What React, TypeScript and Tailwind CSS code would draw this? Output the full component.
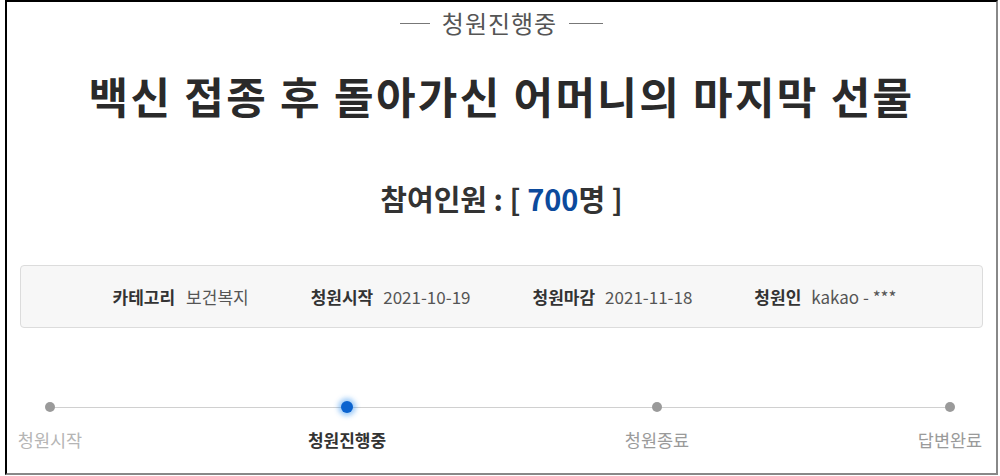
import React from "react";

const font = { fontFamily: '"Noto Sans CJK KR", "Noto Sans", sans-serif' };

function Step({ label, active, light, ml }: { label: string; active?: boolean; light?: boolean; ml: string }) {
  return (
    <div className={"flex flex-col items-center w-[64px] " + ml}>
      <div className="h-[12px] flex items-center justify-center">
        {active ? (
          <div className="w-[12px] h-[12px] rounded-full bg-[#0b63cf] shadow-[0_0_5px_3px_rgba(40,140,240,0.45)]" />
        ) : (
          <div className="w-[10px] h-[10px] rounded-full bg-[#9a9a9a]" />
        )}
      </div>
      <div
        className={
          "mt-[16px] text-[17.5px] leading-[22px] whitespace-nowrap " +
          (active ? "font-bold text-[#333] text-[17px]" : light ? "text-[#b5b5b5]" : "text-[#9a9a9a]")
        }
      >
        {label}
      </div>
    </div>
  );
}

export default function App() {
  return (
    <div className="w-[1000px] h-[476px] bg-white" style={font}>
      <div className="ml-[5px] w-[993px] h-[475px] border-l-2 border-t-2 border-l-black border-t-black border-r-2 border-b-2 border-r-[#888] border-b-[#888]">
        {/* header */}
        <div className="h-[42px] flex items-center justify-center gap-[12px]">
          <div className="w-[30px] h-px bg-[#777]" />
          <div className="text-[24px] leading-[30px] text-[#555] tracking-[1px]">청원진행중</div>
          <div className="w-[34px] h-px bg-[#777]" />
        </div>
        {/* title */}
        <div className="mt-[23px] h-[56px] text-center text-[43px] leading-[56px] font-bold text-[#2a2a2a] tracking-[2.3px]">
          백신 접종 후 돌아가신 어머니의 마지막 선물
        </div>
        {/* count */}
        <div className="mt-[55px] h-[40px] text-center text-[29px] leading-[40px] font-bold text-[#333]">
          참여인원 : [ <span className="text-[#0c4a9c]">700</span>명 ]
        </div>
        {/* info box */}
        <div className="mt-[47px] mx-[13px] h-[63px] rounded-[4px] border border-[#dcdcdc] bg-[#f7f7f7] flex items-center justify-center gap-[62px] text-[17px] pl-[6px]">
          <div className="flex items-center gap-[11px]">
            <span className="font-bold text-[#333]">카테고리</span>
            <span className="text-[#555]">보건복지</span>
          </div>
          <div className="flex items-center gap-[10px]">
            <span className="font-bold text-[#333]">청원시작</span>
            <span className="text-[#555]">2021-10-19</span>
          </div>
          <div className="flex items-center gap-[10px]">
            <span className="font-bold text-[#333]">청원마감</span>
            <span className="text-[#555]">2021-11-18</span>
          </div>
          <div className="flex items-center gap-[10px]">
            <span className="font-bold text-[#333]">청원인</span>
            <span className="text-[#555]">kakao - ***</span>
          </div>
        </div>
        {/* timeline */}
        <div className="relative mt-[73px]">
          <div className="absolute left-[43px] w-[900px] top-[6px] h-px bg-[#d0d0d0]" />
          <div className="relative flex">
            <Step label="청원시작" light ml="ml-[11px]" />
            <Step label="청원진행중" active ml="ml-[233px]" />
            <Step label="청원종료" ml="ml-[246px]" />
            <Step label="답변완료" ml="ml-[229px]" />
          </div>
        </div>
      </div>
    </div>
  );
}
